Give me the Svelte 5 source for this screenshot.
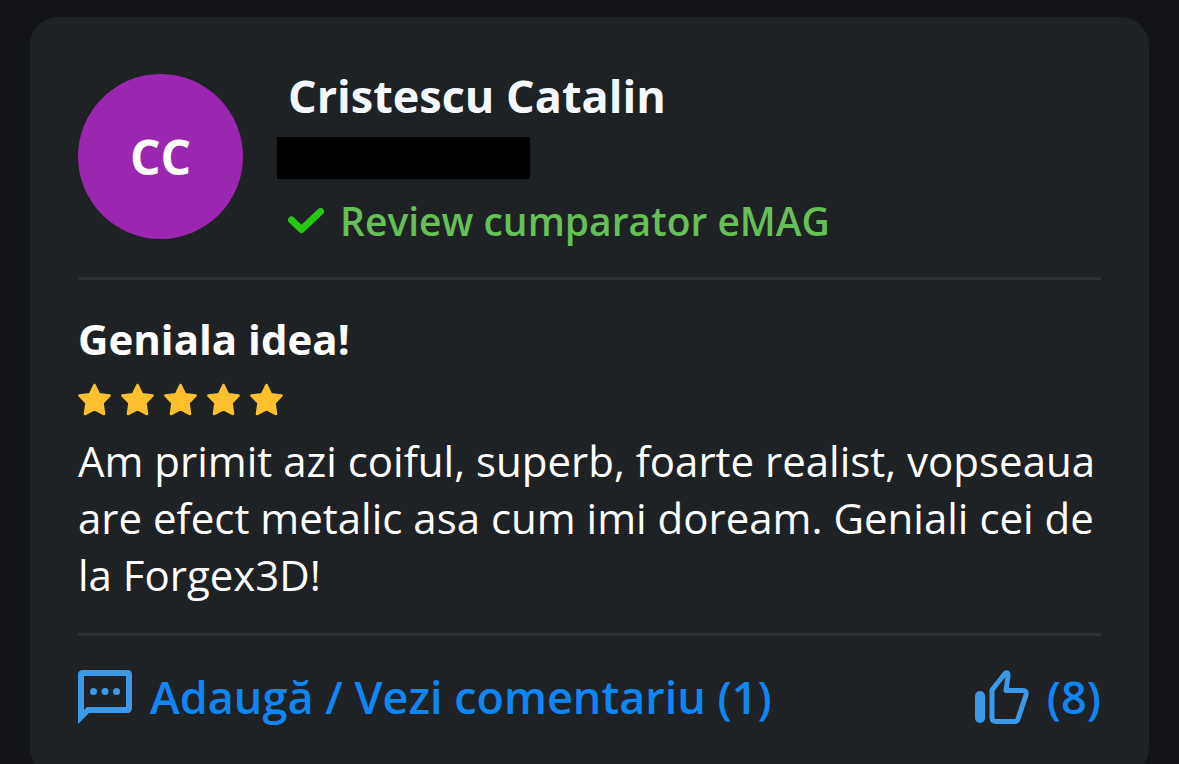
<script>
  let author = "Cristescu Catalin";
  let initials = "CC";
  let rating = 5;
  let comments = 1;
  let likes = 8;
</script>

<style>
  :global(body) {
    overflow: hidden;
    background-color: #131418;
  }

  .page {
    padding: 17px 30px;
    font-family: "Open Sans", "Noto Sans", sans-serif;
  }

  .card {
    border-radius: 28px;
    padding: 57px 48px 48px;
    color: #ffffff;
    background-color: #1f2224;
  }

  .header {
    display: flex;
    gap: 34px;
    border-bottom: 3px solid #2c3033;
    padding-bottom: 28px;
  }

  .avatar {
    display: flex;
    flex: none;
    align-items: center;
    justify-content: center;
    border-radius: 50%;
    width: 165px;
    height: 165px;
    font-size: 48px;
    font-weight: 700;
    background-color: #9b27b0;
  }

  .author {
    display: flex;
    flex-direction: column;
    align-items: flex-start;
  }

  .name {
    margin: 0;
    padding-left: 11px;
    color: #f5f9ff;
    font-size: 45px;
    font-weight: 700;
    line-height: 44px;
  }

  .hidden-date {
    margin: 19px 0 14px;
    width: 253px;
    height: 42px;
    background-color: #000000;
  }

  .verified {
    display: flex;
    align-items: center;
    gap: 16px;
    padding-left: 11px;
    color: #66bf57;
    font-size: 39px;
    font-weight: 600;
    line-height: 56px;
  }

  .verified svg {
    width: 36px;
    height: 26px;
  }

  .body {
    border-bottom: 3px solid #2c3033;
    padding: 30px 0;
  }

  .title {
    margin: 0;
    font-size: 42px;
    font-weight: 700;
    line-height: 57px;
  }

  .stars {
    display: flex;
    gap: 10px;
    padding: 16px 0;
  }

  .stars svg {
    width: 33px;
    height: 33px;
  }

  .text {
    margin: 0;
    font-size: 42px;
    line-height: 57px;
  }

  .actions {
    display: flex;
    justify-content: space-between;
    padding-top: 30px;
  }

  .actions button {
    display: flex;
    align-items: center;
    gap: 18px;
    border: none;
    padding: 0;
    color: #0f86f5;
    background: none;
    font-family: inherit;
    font-size: 45px;
    font-weight: 600;
    line-height: 62px;
    cursor: pointer;
  }

  .actions svg {
    width: 54px;
    height: 54px;
  }
</style>

<main class="page">
  <article class="card">
    <header class="header">
      <div class="avatar">{initials}</div>
      <div class="author">
        <h2 class="name">{author}</h2>
        <div class="hidden-date"></div>
        <div class="verified">
          <svg viewBox="0 0 36 26" aria-hidden="true">
            <path d="M3.5 12 L13.5 21.5 L32.5 3.5" fill="none" stroke="#25c90f" stroke-width="7" stroke-linecap="round" stroke-linejoin="round" />
          </svg>
          <span>Review cumparator eMAG</span>
        </div>
      </div>
    </header>

    <section class="body">
      <h3 class="title">Geniala idea!</h3>
      <div class="stars" role="img" aria-label="{rating} / 5">
        {#each Array(rating) as _}
          <svg viewBox="0 0 33 33">
            <path d="M16.5 2 L21 11.3 L31.5 12.5 L24.5 19.8 L26 31 L16.5 26.2 L7 31 L8.5 19.8 L1.5 12.5 L12 11.3 Z" fill="#ffc02e" stroke="#ffc02e" stroke-width="2.6" stroke-linejoin="round" />
          </svg>
        {/each}
      </div>
      <p class="text">
        Am primit azi coiful, superb, foarte realist, vopseaua are efect metalic asa cum imi doream. Geniali cei de la Forgex3D!
      </p>
    </section>

    <footer class="actions">
      <button type="button">
        <svg viewBox="0 0 54 54" aria-hidden="true">
          <path fill="#3b99e8" fill-rule="evenodd" d="M5 0 H49 Q54 0 54 5 V38 Q54 43 49 43 H11 L0 54 V5 Q0 0 5 0 Z M6 6 V40 L9 37 H48 V6 Z" />
          <circle cx="15.5" cy="21.5" r="3.5" fill="#3b99e8" />
          <circle cx="27" cy="21.5" r="3.5" fill="#3b99e8" />
          <circle cx="38.5" cy="21.5" r="3.5" fill="#3b99e8" />
        </svg>
        <span>Adaugă / Vezi comentariu ({comments})</span>
      </button>
      <button type="button" aria-label="Util ({likes})">
        <svg viewBox="0 0 54 54" aria-hidden="true">
          <rect x="0" y="21" width="10" height="32" rx="5" fill="#3b99e8" />
          <path d="M17 20 L30 3.5 Q33.5 1.5 33 6 L31 20.5 H48 Q52 20.5 51 25 L43 49 Q42 51.5 40 51.5 H21 Q17 51.5 17 47.5 Z" fill="none" stroke="#3b99e8" stroke-width="5" stroke-linejoin="round" />
        </svg>
        <span>({likes})</span>
      </button>
    </footer>
  </article>
</main>
